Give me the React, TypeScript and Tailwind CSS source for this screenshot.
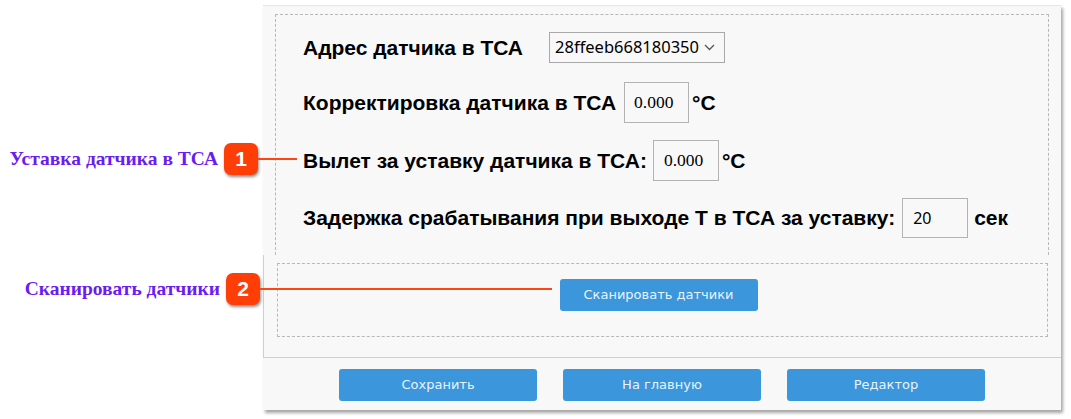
import React from "react"

const label = "font-['Liberation_Sans',Arial,sans-serif] text-[21px] font-bold text-black"
const btn =
  "h-[32px] w-[198px] rounded-[3px] bg-[#3b96db] font-['DejaVu_Sans',sans-serif] text-[13px] text-[#eaf3fb]"

function Chevron() {
  return (
    <svg width="11" height="7" viewBox="0 0 11 7" className="ml-[5px] shrink-0">
      <path d="M1 1l4.5 4.5L10 1" fill="none" stroke="#555" strokeWidth="1.3" />
    </svg>
  )
}

function Badge({ n }: { n: string }) {
  return (
    <div className="flex h-[32px] w-[34px] items-center justify-center rounded-[7px] bg-[#ff3d06] font-['Liberation_Sans',Arial,sans-serif] text-[21px] font-bold text-white shadow-[1px_2px_3px_rgba(0,0,0,0.45)]">
      {n}
    </div>
  )
}

function Callout({ top, text, n, lineWidth, textBox }: { top: number; text: string; n: string; lineWidth: number; textBox: string }) {
  return (
    <div className="absolute left-0 flex items-center" style={{ top }}>
      <span
        className={`text-right font-['Liberation_Serif','Times_New_Roman',serif] text-[19.5px] font-bold text-[#6a1cf2] ${textBox}`}
      >
        {text}
      </span>
      <Badge n={n} />
      <div className="h-[2px] bg-[#ff4515]" style={{ width: lineWidth }} />
    </div>
  )
}

export default function App() {
  return (
    <div className="relative h-[419px] w-[1071px] overflow-hidden bg-white">
      <div className="ml-[263px] pt-[5px]">
        <div className="flex h-[405px] w-[798px] flex-col border-t border-[#e6e6e6] bg-[#f8f8f8] shadow-[2px_3px_3px_rgba(0,0,0,0.35)]">
          <section className="h-[249px] px-[12px] pt-[8px]">
            <div className="h-full border border-b-0 border-dashed border-[#b8b8b8] pl-[27px] pt-[17px]">
              <div className="flex h-[31px] items-center">
                <span className={label}>Адрес датчика в ТСА</span>
                <div className="ml-[26px] flex h-[31px] w-[176px] items-center border border-[#a9a9a9] bg-[#f8f8f8] pl-[5px] font-['Noto_Sans',sans-serif] text-[16.5px] text-black">
                  28ffeeb668180350
                  <Chevron />
                </div>
              </div>
              <div className="mt-[19px] flex h-[41px] items-center">
                <span className={label}>Корректировка датчика в ТСА</span>
                <div className="ml-[8px] flex h-[41px] w-[65px] items-center border border-[#b3b3b3] pl-[9px] font-['Liberation_Serif',serif] text-[17.5px] text-black">
                  0.000
                </div>
                <span className={`${label} ml-[3px]`}>°C</span>
              </div>
              <div className="mt-[17px] flex h-[41px] items-center">
                <span className={label}>Вылет за уставку датчика в ТСА:</span>
                <div className="ml-[6px] flex h-[41px] w-[66px] items-center border border-[#b3b3b3] pl-[10px] font-['Liberation_Serif',serif] text-[17.5px] text-black">
                  0.000
                </div>
                <span className={`${label} ml-[3px]`}>°C</span>
              </div>
              <div className="mt-[17px] flex h-[40px] items-center">
                <span className={label}>Задержка срабатывания при выходе Т в ТСА за уставку:</span>
                <div className="ml-[7px] flex h-[40px] w-[66px] items-center border border-[#b3b3b3] pl-[10px] font-['Noto_Sans',sans-serif] text-[16px] text-black">
                  20
                </div>
                <span className={`${label} ml-[6px]`}>сек</span>
              </div>
            </div>
          </section>
          <section className="h-[103px] border-b border-l border-[#cfcfcf] px-[13px] pt-[8px]">
            <div className="flex h-[74px] justify-center border border-dashed border-[#b8b8b8] pt-[15px] pr-[8px]">
              <button className={btn}>Сканировать датчики</button>
            </div>
          </section>
          <footer className="flex flex-1 justify-center gap-[26px] pt-[11px]">
            <button className={btn}>Сохранить</button>
            <button className={btn}>На главную</button>
            <button className={btn}>Редактор</button>
          </footer>
        </div>
      </div>

      <Callout top={143} text="Уставка датчика в ТСА" n="1" lineWidth={39} textBox="w-[224px] pr-[6px]" />
      <Callout top={273} text="Сканировать датчики" n="2" lineWidth={292} textBox="w-[226px] pr-[6px]" />
    </div>
  )
}
